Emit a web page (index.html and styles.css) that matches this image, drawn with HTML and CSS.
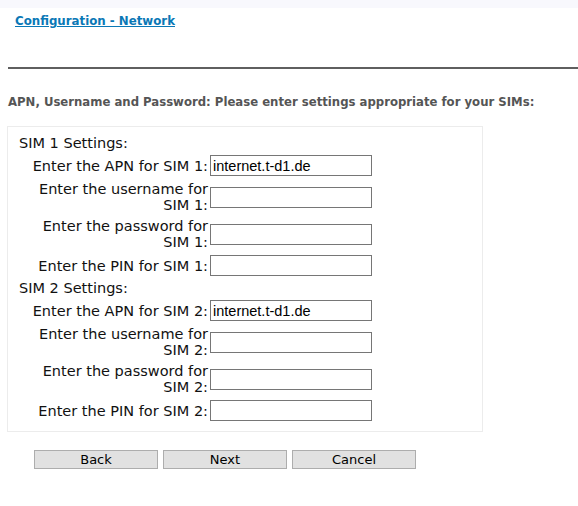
FILE: index.html
```html
<!DOCTYPE html>
<html lang="en">
<head>
    <meta charset="UTF-8">
    <title>Configuration - Network</title>
    <link rel="stylesheet" href="styles.css">
</head>
<body>

<div class="topbar"></div>

<div class="title">
    <a href="#">Configuration - Network</a>
</div>

<hr class="rule">

<h3 class="intro">APN, Username and Password: Please enter settings appropriate for your SIMs:</h3>

<form class="panel">
    <div class="grid">
        <div class="section">SIM 1 Settings:</div>

        <label for="apn1">Enter the APN for SIM 1:</label>
        <input type="text" id="apn1" value="internet.t-d1.de">

        <label for="user1">Enter the username for SIM 1:</label>
        <input type="text" id="user1">

        <label for="pass1">Enter the password for SIM 1:</label>
        <input type="password" id="pass1">

        <label for="pin1">Enter the PIN for SIM 1:</label>
        <input type="password" id="pin1">

        <div class="section">SIM 2 Settings:</div>

        <label for="apn2">Enter the APN for SIM 2:</label>
        <input type="text" id="apn2" value="internet.t-d1.de">

        <label for="user2">Enter the username for SIM 2:</label>
        <input type="text" id="user2">

        <label for="pass2">Enter the password for SIM 2:</label>
        <input type="password" id="pass2">

        <label for="pin2">Enter the PIN for SIM 2:</label>
        <input type="password" id="pin2">
    </div>
</form>

<div class="buttons">
    <button type="button" class="btn">Back</button>
    <button type="button" class="btn">Next</button>
    <button type="button" class="btn">Cancel</button>
</div>

</body>
</html>
```

FILE: styles.css
```css
body {
    font-family: "DejaVu Sans", Verdana, sans-serif;
    font-size: 14.5px;
    color: #111;
    background-color: white;
    margin: 0;
    padding: 0;
}
.topbar {
    height: 8px;
    background-color: #f8f8fd;
}
.title {
    padding: 4px 0 0 15px;
    line-height: 16px;
}
.title a {
    color: #0a78b6;
    font-weight: bold;
    font-size: 11.8px;
}
.rule {
    border: none;
    border-top: 2px solid #5f5f5f;
    margin: 38px 0 0 8px;
}
.intro {
    font-size: 11.7px;
    font-weight: bold;
    color: #555;
    margin: 25px 0 0 8px;
    line-height: 16px;
}
.panel {
    width: 463px;
    margin: 16px 0 0 7px;
    padding: 8px 0 9px 11px;
    border: 1px solid #ececec;
}
.grid {
    display: grid;
    grid-template-columns: 189px 162px;
    column-gap: 2px;
    row-gap: 3px;
    align-items: center;
}
.section {
    grid-column: 1 / 3;
    line-height: 16px;
}
label {
    text-align: right;
    line-height: 16px;
    padding: 1px 0;
}
input[type="text"],
input[type="password"] {
    box-sizing: border-box;
    width: 162px;
    height: 21px;
    margin: 1px 0;
    padding: 1px 2px;
    border: 1px solid #767676;
    font-family: "Liberation Sans", Arial, sans-serif;
    font-size: 14.5px;
    color: #000;
}
.buttons {
    display: flex;
    gap: 5px;
    margin: 18px 0 0 34px;
}
.btn {
    width: 124px;
    height: 19px;
    padding: 0;
    background-color: #e1e1e1;
    border: 1px solid #adadad;
    font-family: "DejaVu Sans", Verdana, sans-serif;
    font-size: 13px;
    line-height: 17px;
    color: #000;
}
```
